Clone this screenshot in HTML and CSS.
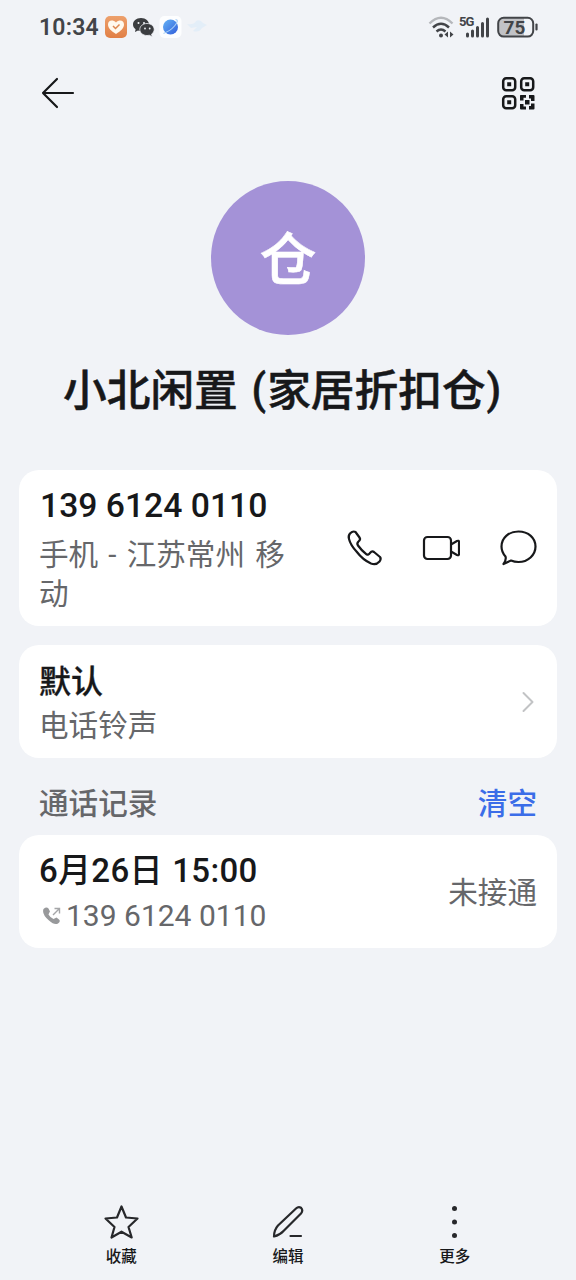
FILE: index.html
```html
<!DOCTYPE html>
<html lang="zh-CN">
<head>
<meta charset="utf-8">
<meta name="viewport" content="width=device-width, initial-scale=1">
<title>联系人</title>
<link rel="stylesheet" href="styles.css">
</head>
<body>
<div class="screen">
  <header class="status">
    <span class="clock">10:34</span>
    <svg class="status-apps" width="104" height="26" viewBox="0 0 104 26">
      <defs>
        <linearGradient id="orange" x2="0" y2="1"><stop stop-color="#eda06c"/><stop offset="1" stop-color="#e17f45"/></linearGradient>
        <linearGradient id="blue" x2="1" y2="1"><stop stop-color="#65b4f5"/><stop offset="1" stop-color="#315ddb"/></linearGradient>
      </defs>
      <rect x="1" y="2" width="22" height="22" rx="5" fill="url(#orange)"/>
      <path d="M12 20C7 17 4 14 4 10.500C4 6 9 5.500 12 8.500C15 5.500 20 6 20 10.500C20 14 17 17 12 20Z" fill="#fff9ee"/>
      <path d="M9 12l2.500 2.500l4-4" fill="none" stroke="#dd874f" stroke-width="1.500"/>
      <g fill="#3b3d40">
        <path d="M37 4c-5 0-8 3-8 6.500 0 2 1 3.600 2.600 4.800L31 18l3-1.500q1.500.500 3 .5c5 0 8-3 8-6.500S42 4 37 4Z"/>
        <path stroke="#f1f3f7" stroke-width=".8" d="M43 9.500c-4.200 0-7.200 2.700-7.200 6s3 6 7.200 6q1.200 0 2.200-.3l3 1.500-.6-2.600c1.700-1.100 2.600-2.800 2.600-4.600 0-3.300-2.900-6-7.200-6Z"/>
      </g>
      <g fill="#f1f3f7"><circle cx="34.500" cy="9" r="1"/><circle cx="40" cy="9" r="1"/><circle cx="41" cy="14.500" r=".9"/><circle cx="45.700" cy="14.500" r=".9"/></g>
      <rect x="55.500" y="2" width="22" height="22" rx="5" fill="#fdfeff"/>
      <circle cx="66.500" cy="13" r="7.500" fill="url(#blue)"/>
      <path d="M71.500 5.500c3 0 2 3-1 6.500S62 18.500 59.500 19.500" fill="none" stroke="#a9cff5" stroke-width="1.100"/>
      <path d="M83 10q7 1 9-3q4-2 7 2l4 2-5 3q-3 5-9 3l4-4-6 1Z" fill="#e3eef8"/>
    </svg>
    <svg class="status-system" width="112" height="26" viewBox="0 0 112 26">
      <g fill="none" stroke-width="2.400">
        <path d="M1.500 9.500Q13-2 24.500 9.500" stroke="#b5b7bb"/>
        <path d="M5 13.500Q13 6 21 13.500M8.500 17.500Q13 13.500 17.500 17.500" stroke="#424448"/>
      </g>
      <circle cx="13" cy="21.500" r="2" fill="#424448"/>
      <path d="M20 17.500v6l-3.500-3Zm2 0v6l3.500-3Z" fill="#424448"/>
      <text x="31" y="12" class="network">5G</text>
      <path d="M39.500 20v2M44.500 17v5M49.500 13.500v8.500M54.500 9.500v12.500M59.500 5v17" fill="none" stroke="#424448" stroke-width="3" stroke-linecap="round"/>
      <rect x="70.200" y="3.800" width="35" height="18.800" rx="5.500" fill="#f1f3f7"/>
      <path d="M96 3.800H75.700a5.500 5.500 0 0 0-5.500 5.500v7.800a5.500 5.500 0 0 0 5.500 5.500H96Z" fill="#c1c2c6"/>
      <rect x="70.200" y="3.800" width="35" height="18.800" rx="5.500" fill="none" stroke="#424448" stroke-width="2"/>
      <path d="M108.500 10.500v5" stroke="#424448" stroke-width="2.200" stroke-linecap="round"/>
      <text x="86.500" y="20" text-anchor="middle" class="battery">75</text>
    </svg>
  </header>

  <nav class="toolbar">
    <svg width="36" height="36" viewBox="0 0 36 36" fill="none" stroke="#17181a" stroke-width="2.200" stroke-linecap="round" stroke-linejoin="round"><path d="M33 18H3M17 4L3 18l14 14"/></svg>
    <svg width="36" height="36" viewBox="0 0 36 36">
      <g fill="none" stroke="#17181a" stroke-width="2.500"><rect x="3.200" y="3.200" width="12" height="12" rx="3"/><rect x="21.200" y="3.200" width="12" height="12" rx="3"/><rect x="3.200" y="21.200" width="12" height="12" rx="3"/></g>
      <g fill="#17181a"><path d="M7.200 7.200h4v4h-4ZM25.200 7.200h4v4h-4ZM7.200 25.200h4v4h-4ZM25 25h4.500v4.500H25Z"/><path d="M20.500 20h5.500v2.800h-2.500v2.700h-3.500V20.500ZM29 20h4.500q1 0 1 1v5H31v-2.500h-2ZM20 29h3.500v2.500H26v3h-5q-1 0-1-1ZM31 28.500h3.500v5q0 1-1 1H29V31h2Z"/></g>
    </svg>
  </nav>

  <section class="profile">
    <div class="avatar">仓</div>
    <h1 class="name">小北闲置 <span class="paren">(</span>家居折扣仓<span class="paren">)</span></h1>
  </section>

  <main class="content">
    <section class="card phone">
      <div class="phone-info">
        <p class="primary number">139 6124 0110</p>
        <p class="secondary place">手机 - 江苏常州 移动</p>
      </div>
      <div class="actions">
        <svg width="38" height="38" viewBox="0 0 38 38"><path d="M5 4.500Q8 1.500 10.500 3L14.500 8.500Q16 10.500 13.500 12.500Q11.500 14.500 13 16.500Q16.500 21.500 21.500 25.300Q23.500 26.500 25 24Q27 21.500 29 23L35 28Q36.500 30 34.500 32.500Q31 36.500 26 34.500Q18 31 11.500 22.500Q5.500 16 4 10Q3 7 5 4.500Z"/></svg>
        <svg width="38" height="38" viewBox="0 0 38 38"><rect x="2" y="8" width="27" height="22" rx="3.500"/><path d="M29 15.500l6-3.500q2-.8 2 1v12q0 1.800-2 1L29 22.500"/></svg>
        <svg width="38" height="38" viewBox="0 0 38 38"><path d="M6.500 27.500Q2.500 23 2.500 17.500C2.500 9 9.500 2.500 19.500 2.500S36.500 9 36.500 17.500S29 33 19.500 33Q15.500 33 12 31.500L4.500 35Q7.500 31 6.500 27.500Z"/></svg>
      </div>
    </section>

    <section class="card ringtone">
      <div>
        <p class="primary default">默认</p>
        <p class="secondary tone">电话铃声</p>
      </div>
      <svg class="chevron" width="14" height="22" viewBox="0 0 14 22"><path d="M2.500 2l9 9-9 9"/></svg>
    </section>

    <div class="section-head"><h2>通话记录</h2><span class="clear">清空</span></div>

    <section class="card record">
      <div>
        <p class="primary date">6月26日 15:00</p>
        <p class="secondary called">
          <svg width="20" height="20" viewBox="0 0 20 20"><path d="M1.500 3Q4.500 .5 6.500 2.500L8 5.500Q7 7 6.500 8.500Q8.500 12 11.500 13Q13 12 14.500 11.500L17 13.500Q19 15.500 16 17.500Q12.500 19.500 7 14.500Q-.5 8 1.500 3Z" fill="#98999b"/><path d="M11 9l6-6M12.500 2.500h5v5" fill="none" stroke="#a5a6a8" stroke-width="1.400"/></svg><span>139 6124 0110</span>
        </p>
      </div>
      <span class="secondary result">未接通</span>
    </section>
  </main>

  <footer class="tabs">
    <div class="tab"><svg width="38" height="38" viewBox="0 0 38 38"><path d="M19.500 3.500l4.500 11L35.500 15.500l-9 8.500L29.700 34.500L19.500 28.700L9.500 34.500l3-10.500L3.500 15.500L15 14.500Z"/></svg><span>收藏</span></div>
    <div class="tab"><svg width="38" height="38" viewBox="0 0 38 38"><path d="M5 33.500Q5 27 9 22.500L27 5.500Q29.500 3.200 32 4.800Q34.500 7.500 32 10.500L14.500 28Q11 32 5 33.500ZM21.500 33H32"/></svg><span>编辑</span></div>
    <div class="tab"><svg width="38" height="38" viewBox="0 0 38 38"><g fill="#27282b" stroke="none"><circle cx="18.500" cy="5.500" r="2.500"/><circle cx="18.500" cy="19" r="2.500"/><circle cx="18.500" cy="32.500" r="2.500"/></g></svg><span>更多</span></div>
  </footer>
</div>
</body>
</html>
```
FILE: styles.css
```css
* { box-sizing: border-box; }
body {
  margin: 0;
  background: #f1f3f7;
  color: #17181a;
  font-family: Roboto, "Noto Sans CJK SC", sans-serif;
}
h1, h2, p { margin: 0; }
svg { display: block; flex: none; }
.screen { display: flex; flex-direction: column; height: 1280px; overflow: hidden; }

.status { display: flex; align-items: center; height: 54px; padding: 0 36px 0 39px; }
.clock { width: 65px; color: #424448; font-size: 23px; font-weight: 600; letter-spacing: .2px; white-space: nowrap; }
.status-system { margin-left: auto; }
.network { fill: #424448; font-size: 13px; font-weight: 700; letter-spacing: -1px; }
.battery { fill: #424448; font-size: 19px; font-weight: 700; }

.toolbar { display: flex; justify-content: space-between; align-items: center; height: 78px; padding: 0 40px; }

.profile { padding-top: 49px; }
.avatar {
  display: flex;
  justify-content: center;
  align-items: center;
  width: 154px;
  height: 154px;
  margin: 0 auto;
  padding-bottom: 6px;
  border-radius: 50%;
  background: #a492d7;
  color: #fff;
  font-size: 57px;
  font-weight: 500;
  -webkit-text-stroke: .5px #fff;
}
.name {
  height: 64px;
  margin-top: 23px;
  padding-left: 63px;
  font-size: 43.700px;
  font-weight: 500;
  line-height: 67px;
  white-space: nowrap;
  word-spacing: 3px;
  -webkit-text-stroke: .5px #17181a;
}
.paren { margin-right: 1px; font-size: 42px; line-height: 1; vertical-align: 2px; }
.paren:last-child { margin-left: 1px; }

.content { display: flex; flex-direction: column; padding: 48px 19px 0; }
.card { display: flex; justify-content: space-between; padding: 0 20px; border-radius: 20px; background: #fff; }
.primary { font-size: 33px; font-weight: 500; line-height: 44px; white-space: nowrap; }
.secondary { color: #66676a; font-size: 29.600px; line-height: 39px; }
.phone { height: 156px; padding-top: 14px; }
.phone-info { width: 260px; }
.number { padding-left: 1px; font-size: 33.700px; }
.place { margin-top: 8px; word-spacing: 2.800px; }
.actions { display: flex; gap: 39px; padding-top: 45px; }
.actions svg { fill: none; stroke: #17181a; stroke-width: 2.200; stroke-linejoin: round; }
.ringtone { align-items: center; height: 113px; margin-top: 19px; }
.default { font-size: 32px; -webkit-text-stroke: .3px #17181a; }
.tone { margin-top: 3px; margin-bottom: -3px; }
.chevron { margin-right: 2px; fill: none; stroke: #c2c3c5; stroke-width: 2; stroke-linecap: round; stroke-linejoin: round; }

.section-head { display: flex; justify-content: space-between; align-items: center; height: 77px; padding: 10px 20px 0; font-size: 29.600px; font-weight: 500; }
.section-head h2 { color: #66676a; font-size: inherit; font-weight: inherit; }
.clear { color: #3b6de8; }
.record { align-items: center; height: 113px; }
.date { letter-spacing: .3px; word-spacing: 1px; }
.called { display: flex; align-items: center; gap: 4px; margin-top: 3px; margin-bottom: -1px; padding-left: 3px; font-size: 30px; }
.result { padding-top: 4px; }

.tabs { display: flex; width: 500px; margin: auto auto 0; height: 77px; }
.tab { display: flex; flex: 1; flex-direction: column; align-items: center; font-size: 15.500px; font-weight: 500; line-height: 24px; gap: 4px; }
.tab svg { fill: none; stroke: #27282b; stroke-width: 2.200; stroke-linecap: round; stroke-linejoin: round; }
```
